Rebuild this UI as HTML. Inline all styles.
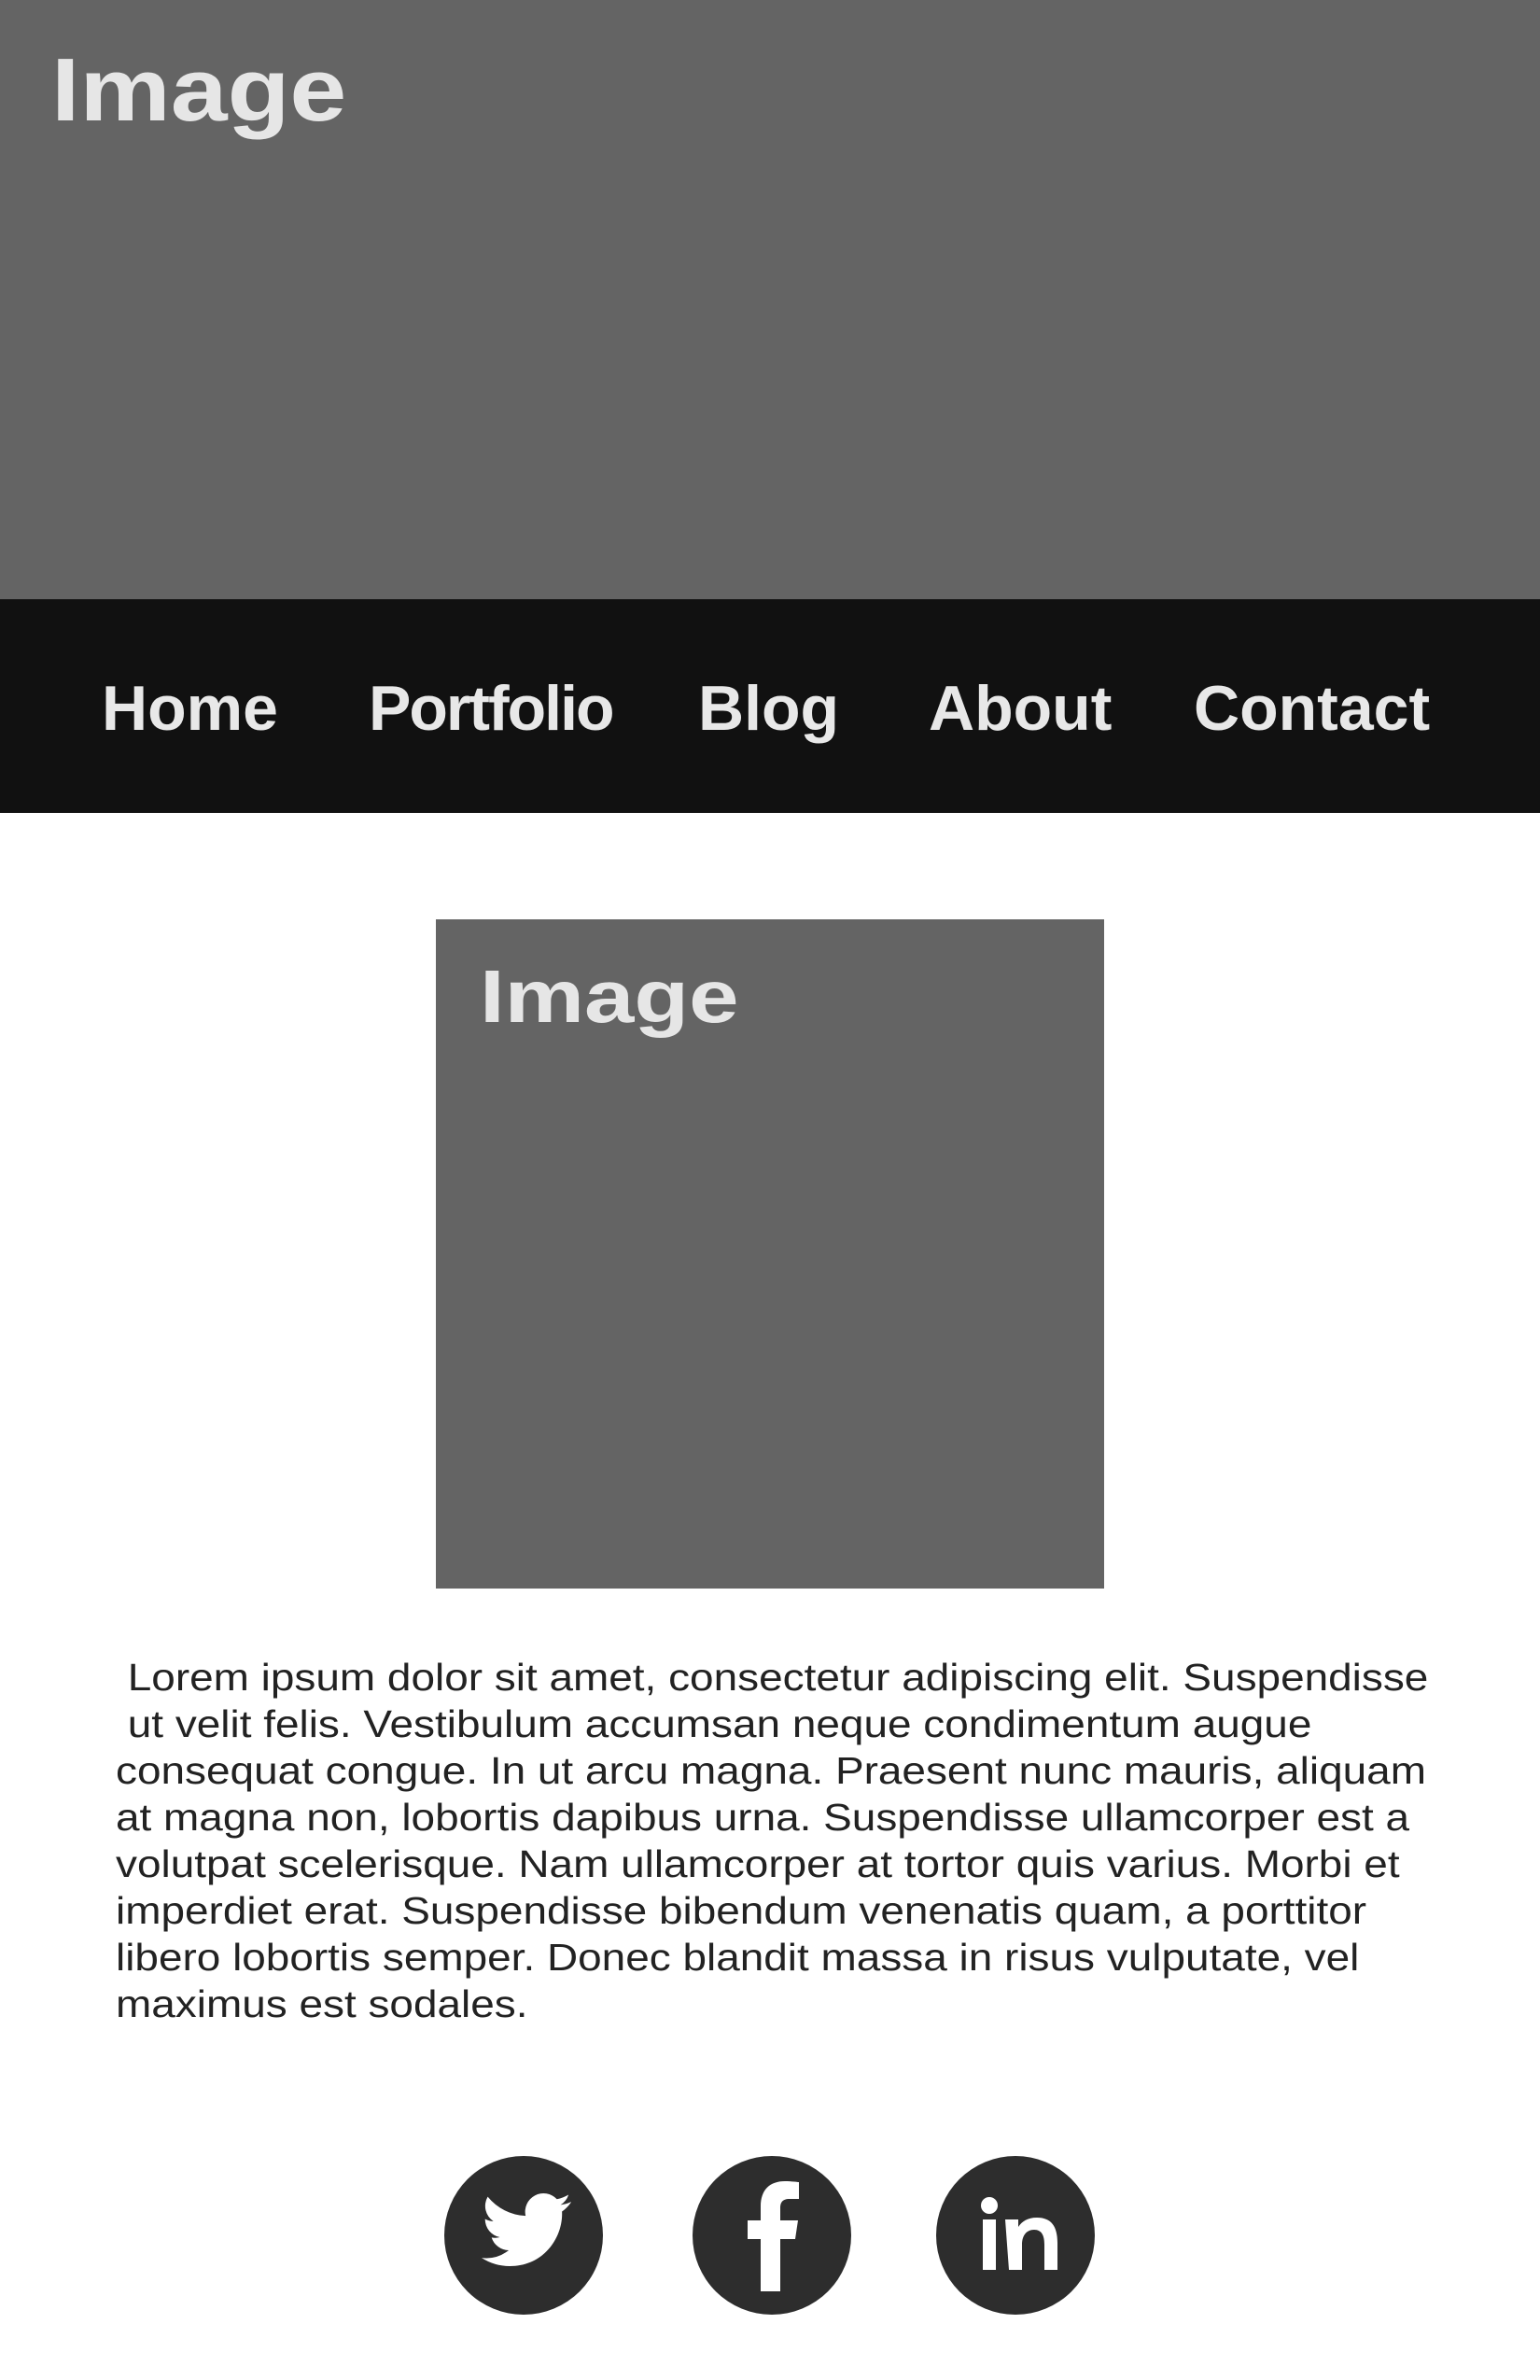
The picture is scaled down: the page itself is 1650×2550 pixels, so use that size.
<!DOCTYPE html>
<html><head><meta charset="utf-8"><style>
body{margin:0;width:1650px;height:2550px;background:#fff;position:relative;overflow:hidden;font-family:"Liberation Sans",sans-serif}
.a{position:absolute;line-height:1;white-space:pre;transform-origin:left top}
.n{position:absolute;top:725px;font-size:68px;font-weight:bold;color:#e8e8e8;line-height:1}
</style></head><body>
<div style="position:absolute;left:0;top:0;width:1650px;height:642px;background:#646464"></div>
<div class="a" style="left:55px;top:49px;font-size:96px;font-weight:bold;color:#e6e6e6;transform:scaleX(1.14)">Image</div>
<div style="position:absolute;left:0;top:642px;width:1650px;height:229px;background:#111"></div>
<div class="n" style="left:109px">Home</div>
<div class="n" style="left:395px;letter-spacing:-2px">Portfolio</div>
<div class="n" style="left:748px">Blog</div>
<div class="n" style="left:995px">About</div>
<div class="n" style="left:1279px">Contact</div>
<div style="position:absolute;left:467px;top:985px;width:716px;height:717px;background:#646464"></div>
<div class="a" style="left:514px;top:1028px;font-size:80px;font-weight:bold;color:#e6e6e6;transform:scaleX(1.2)">Image</div>
<div class="a" style="left:124px;top:1772px;font-size:41px;line-height:50px;color:#222;transform:scaleX(1.12)"> Lorem ipsum dolor sit amet, consectetur adipiscing elit. Suspendisse
 ut velit felis. Vestibulum accumsan neque condimentum augue
consequat congue. In ut arcu magna. Praesent nunc mauris, aliquam
at magna non, lobortis dapibus urna. Suspendisse ullamcorper est a
volutpat scelerisque. Nam ullamcorper at tortor quis varius. Morbi et
imperdiet erat. Suspendisse bibendum venenatis quam, a porttitor
libero lobortis semper. Donec blandit massa in risus vulputate, vel
maximus est sodales.</div>
<svg style="position:absolute;left:0;top:2300px" width="1650" height="200">
<circle cx="561" cy="95" r="85" fill="#2d2d2d"/>
<path fill="#fff" transform="translate(516,41) scale(4)" d="M23.95 4.57a10 10 0 0 1-2.82.77 4.96 4.96 0 0 0 2.16-2.72c-.95.56-2 .96-3.12 1.19a4.92 4.92 0 0 0-8.38 4.48A13.94 13.94 0 0 1 1.64 3.16a4.92 4.92 0 0 0 1.52 6.57 4.9 4.9 0 0 1-2.230-.61v.06a4.92 4.92 0 0 0 3.95 4.830 4.996 4.996 0 0 1-2.21.08 4.93 4.93 0 0 0 4.6 3.42A9.87 9.87 0 0 1 0 19.54a13.94 13.94 0 0 0 7.55 2.21c9.05 0 14-7.5 14-13.98 0-.21 0-.42-.02-.63A9.94 9.94 0 0 0 24 4.59z"/>
<circle cx="827" cy="95" r="85" fill="#2d2d2d"/>
<path fill="#fff" d="M815 155v-56h-14v-20h14v-15c0-18 10-27 26-27 7 0 14 1 15 1v18h-10c-8 0-10 4-10 10v13h19l-3 20h-16v56z"/>
<circle cx="1088" cy="95" r="85" fill="#2d2d2d"/>
<rect x="1053" y="78" width="14" height="54" fill="#fff"/>
<circle cx="1060" cy="63" r="9" fill="#fff"/>
<path fill="#fff" d="M1077 78h14v8c4-6 10-10 20-10 15 0 22 9 22 27v29h-14v-27c0-10-3-16-11-16-8 0-13 6-13 16v27h-14z"/>
</svg>
</body></html>
